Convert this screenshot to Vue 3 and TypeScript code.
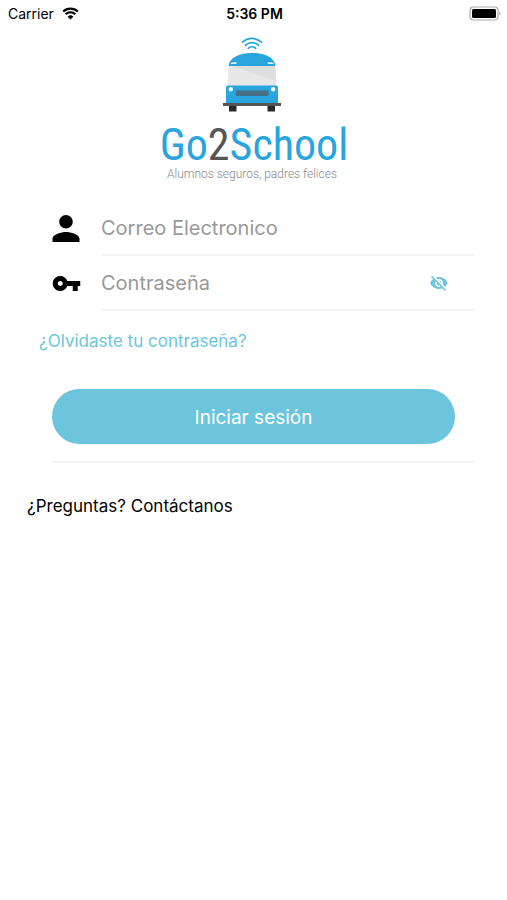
<script setup lang="ts">
import { ref } from 'vue'

const email = ref('')
const password = ref('')
const passwordVisible = ref(false)

function togglePassword(): void {
  passwordVisible.value = !passwordVisible.value
}
</script>

<template>
  <div class="screen">
    <header class="status">
      <div class="carrier">
        <span>Carrier</span>
        <svg class="wifi" viewBox="0 0 17 13" aria-hidden="true">
          <path d="M1.2 4.6a10.4 10.4 0 0 1 14.6 0M3.7 7.3a6.8 6.8 0 0 1 9.6 0" fill="none" stroke="#000" stroke-width="2.1" />
          <path d="M8.5 12.6 5.6 9.7a4.2 4.2 0 0 1 5.8 0z" />
        </svg>
      </div>
      <time class="clock">5:36 PM</time>
      <div class="power">
        <svg class="battery" viewBox="0 0 32 16" aria-hidden="true">
          <rect x="1" y="1" width="28" height="13" rx="3.5" fill="#fff" stroke="#a9a9a9" stroke-width="1.2" />
          <rect x="3" y="3" width="24" height="9" rx="1.5" />
          <path d="M30.4 5.5c1.4.6 1.4 3.4 0 4z" fill="#a0a0a0" />
        </svg>
      </div>
    </header>

    <main>
      <div class="brand">
        <svg class="bus" viewBox="0 0 60 76" aria-hidden="true">
          <g fill="none" stroke="#27a5dc" stroke-width="1.7" stroke-linecap="round">
            <path d="M20.6 5.2c5.2-5 13.6-5 18.8 0" />
            <path d="M23.4 8.3c3.7-3.5 9.5-3.5 13.2 0" />
            <path d="M26.3 11.3c2.1-2 5.3-2 7.4 0" />
          </g>
          <path d="M6.500 29C7.500 20 18 16 30 16s22.500 4 23.500 13z" fill="#27a5dc" />
          <path d="M8 27l2-1.700h5l-.8 1.700zM46 27l-.8-1.700h5l2 1.700z" fill="#d8f0fb" />
          <path d="M6.500 29h47l.7 20H6z" fill="#e7e7e7" />
          <path d="M10 29h43.500l.5 15z" fill="#dedede" />
          <path d="M6 48.500h48.500q1.500 0 1.500 1.500v17H4V50q0-1.500 2-1.500z" fill="#27a5dc" />
          <rect x="14" y="53.500" width="32.500" height="5.500" fill="#476f86" />
          <circle cx="8.800" cy="52.300" r="2.200" fill="#eefaff" />
          <circle cx="51.200" cy="52.300" r="2.200" fill="#eefaff" />
          <rect x="1" y="66" width="58" height="3" fill="#555" />
          <path d="M7 69h7.500v5.500H7zM45.500 69H53v5.500h-7.500z" fill="#292929" />
        </svg>
        <h1 class="name">Go<span class="two">2</span>School</h1>
        <p class="tagline">Alumnos seguros, padres felices</p>
      </div>

      <form class="login" @submit.prevent>
        <div class="row">
          <label class="icon" for="email" aria-label="Correo Electronico">
            <svg class="person" viewBox="4 4 16 16" aria-hidden="true">
              <path d="M12 12c2.210 0 4-1.790 4-4s-1.790-4-4-4-4 1.790-4 4 1.790 4 4 4zm0 2c-2.670 0-8 1.340-8 4v2h16v-2c0-2.660-5.330-4-8-4z" />
            </svg>
          </label>
          <div class="field">
            <input id="email" v-model="email" type="email" placeholder="Correo Electronico" />
          </div>
        </div>
        <div class="row">
          <label class="icon" for="password" aria-label="Contraseña">
            <svg class="key" viewBox="1 6 22 12" aria-hidden="true">
              <path d="M12.650 10C11.830 7.670 9.610 6 7 6c-3.310 0-6 2.690-6 6s2.690 6 6 6c2.610 0 4.830-1.670 5.650-4H17v4h4v-4h2v-4H12.650zM7 14c-1.100 0-2-.9-2-2s.9-2 2-2 2 .9 2 2-.9 2-2 2z" />
            </svg>
          </label>
          <div class="field">
            <input id="password" v-model="password" :type="passwordVisible ? 'text' : 'password'" placeholder="Contraseña" />
            <button class="eye" type="button" aria-label="Mostrar contraseña" @click="togglePassword">
              <svg viewBox="1 2 22 20" aria-hidden="true">
                <path d="M12 7c2.760 0 5 2.240 5 5 0 .65-.13 1.260-.36 1.830l2.920 2.920c1.510-1.260 2.700-2.890 3.430-4.750-1.730-4.390-6-7.500-11-7.500-1.400 0-2.740.25-3.980.7l2.160 2.160C10.740 7.130 11.350 7 12 7zM2 4.270l2.280 2.280.46.46C3.080 8.300 1.780 10.020 1 12c1.730 4.390 6 7.500 11 7.500 1.550 0 3.030-.3 4.380-.84l.42.42L19.730 22 21 20.730 3.270 3 2 4.270zM7.530 9.800l1.550 1.550c-.05.21-.08.43-.08.65 0 1.660 1.340 3 3 3 .22 0 .44-.03.65-.08l1.550 1.550c-.67.33-1.410.53-2.200.53-2.760 0-5-2.240-5-5 0-.79.2-1.530.53-2.200zm4.310-.78l3.150 3.150.02-.16c0-1.660-1.340-3-3-3l-.17.01z" />
              </svg>
            </button>
          </div>
        </div>
        <a class="forgot" href="#">¿Olvidaste tu contraseña?</a>
        <div class="action">
          <button class="submit" type="submit">Iniciar sesión</button>
        </div>
      </form>
      <a class="contact" href="#">¿Preguntas? Contáctanos</a>
    </main>
  </div>
</template>

<style>
body {
  background: #fff;
}
</style>

<style scoped>
.screen {
  font-family: Inter, Roboto, sans-serif;
  color: #000;
}

.status {
  display: grid;
  grid-template-columns: 1fr auto 1fr;
  align-items: center;
  height: 27px;
  padding: 0 6px 0 8px;
  font-size: 14px;
}

.carrier {
  display: flex;
  align-items: center;
  gap: 8px;
}

.wifi {
  width: 17px;
  height: 13px;
}

.clock {
  font-weight: 600;
}

.power {
  display: flex;
  justify-content: flex-end;
}

.battery {
  width: 32px;
  height: 16px;
}

.brand {
  display: flex;
  flex-direction: column;
  align-items: center;
  padding: 10px 3px 0 0;
}

.bus {
  width: 60px;
  height: 76px;
}

.name {
  margin: 11px 0 0;
  padding-left: 4px;
  font-family: "Roboto Condensed", "Liberation Sans Narrow", Roboto, sans-serif;
  font-size: 44px;
  font-weight: 400;
  line-height: 42px;
  color: #27a5dc;
}

.two {
  color: #555;
}

.tagline {
  margin: 0;
  font-family: Roboto, sans-serif;
  font-size: 12px;
  font-weight: 300;
  line-height: 16px;
  color: #888;
}

.login {
  display: flex;
  flex-direction: column;
  padding: 13px 32px 0 52px;
}

.row {
  display: flex;
  height: 55px;
}

.row:first-child {
  margin-top: 0;
}

.icon {
  display: flex;
  align-items: center;
  width: 49px;
}

.person {
  width: 28px;
  height: 27px;
}

.key {
  width: 29px;
  height: 15px;
}

.field {
  display: flex;
  flex: 1;
  align-items: center;
  min-width: 0;
  border-bottom: 2px solid #f2f2f2;
}

input {
  flex: 1;
  min-width: 0;
  padding: 0;
  border: 0;
  outline: 0;
  background: none;
  font: inherit;
  font-size: 20px;
  color: #000;
}

input::placeholder {
  color: #999;
  opacity: 1;
}

.eye {
  display: flex;
  margin-right: 27px;
  padding: 0;
  border: 0;
  background: none;
}

.eye svg {
  width: 18px;
  height: 16px;
  fill: #6cc5dc;
}

.forgot {
  align-self: flex-start;
  margin: 20px 0 0 -13px;
  font-size: 17px;
  line-height: 20px;
  color: #6cc5dc;
  text-decoration: none;
}

.action {
  margin-top: 38px;
  padding: 0 20px 17px 0;
  border-bottom: 2px solid #f2f2f2;
}

.submit {
  display: block;
  width: 100%;
  height: 55px;
  padding: 2px 0 0;
  border: 0;
  border-radius: 28px;
  background: #6cc5dc;
  font: inherit;
  font-size: 19px;
  color: #fff;
}

.contact {
  display: block;
  margin: 33px 27px 0;
  font-size: 17px;
  line-height: 20px;
  color: #000;
  text-decoration: none;
}

.brand {
  padding-bottom: 6px;
}
</style>
